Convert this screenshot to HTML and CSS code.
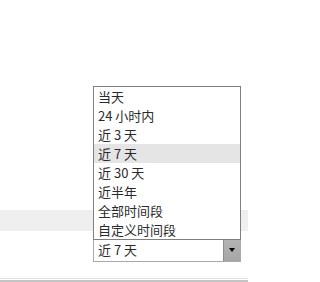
FILE: index.html
```html
<!DOCTYPE html>
<html lang="zh">
<head>
<meta charset="utf-8">
<link rel="stylesheet" href="styles.css">
</head>
<body>
<div class="page">
  <div class="top"></div>
  <div class="band"></div>
  <div class="toolbar">
    <div class="select">
      <ul class="list">
        <li>当天</li>
        <li>24 小时内</li>
        <li>近 3 天</li>
        <li class="active">近 7 天</li>
        <li>近 30 天</li>
        <li>近半年</li>
        <li>全部时间段</li>
        <li>自定义时间段</li>
      </ul>
      <div class="value">近 7 天</div>
      <div class="btn"><span class="tri"></span></div>
    </div>
  </div>
  <div class="line1"></div>
  <div class="line2"></div>
</div>
</body>
</html>
```
FILE: styles.css
```css
html, body { margin: 0; padding: 0; background: #fff; }
.page {
  width: 248px;
  height: 282px;
  overflow: hidden;
  font-family: "Noto Sans CJK SC", "Noto Sans", sans-serif;
  font-size: 13px;
  color: #2a2a2a;
}
.top { height: 210px; }
.band { height: 21px; background: #efefef; }
.toolbar { padding: 7px 0 0 93px; height: 47px; box-sizing: border-box; }
.select {
  position: relative;
  width: 148px;
  height: 24px;
  box-sizing: border-box;
  border: 1px solid #a9a9a9;
  display: flex;
  background: #fff;
}
.value {
  flex: 1;
  padding-left: 4px;
  line-height: 22px;
}
.btn {
  width: 16px;
  background: linear-gradient(#b4b4b4, #a6a6a6);
  border-left: 1px solid #8d8d8d;
  display: flex;
  align-items: center;
  justify-content: center;
}
.tri {
  width: 0; height: 0;
  border-left: 3.5px solid transparent;
  border-right: 3.5px solid transparent;
  border-top: 4px solid #000;
}
.list {
  position: absolute;
  left: -1px;
  bottom: calc(100% - 1px);
  width: 148px;
  box-sizing: border-box;
  margin: 0;
  padding: 0;
  list-style: none;
  border: 1px solid #7f7f7f;
  background: #fff;
}
.list li {
  height: 19px;
  line-height: 19px;
  padding-left: 4px;
  white-space: nowrap;
}
.list li.active { background: #e5e5e5; }
.line1 { height: 1px; background: #e0e0e0; margin-bottom: 1px; }
.line2 { height: 2px; background: #c4c4c4; }
```
